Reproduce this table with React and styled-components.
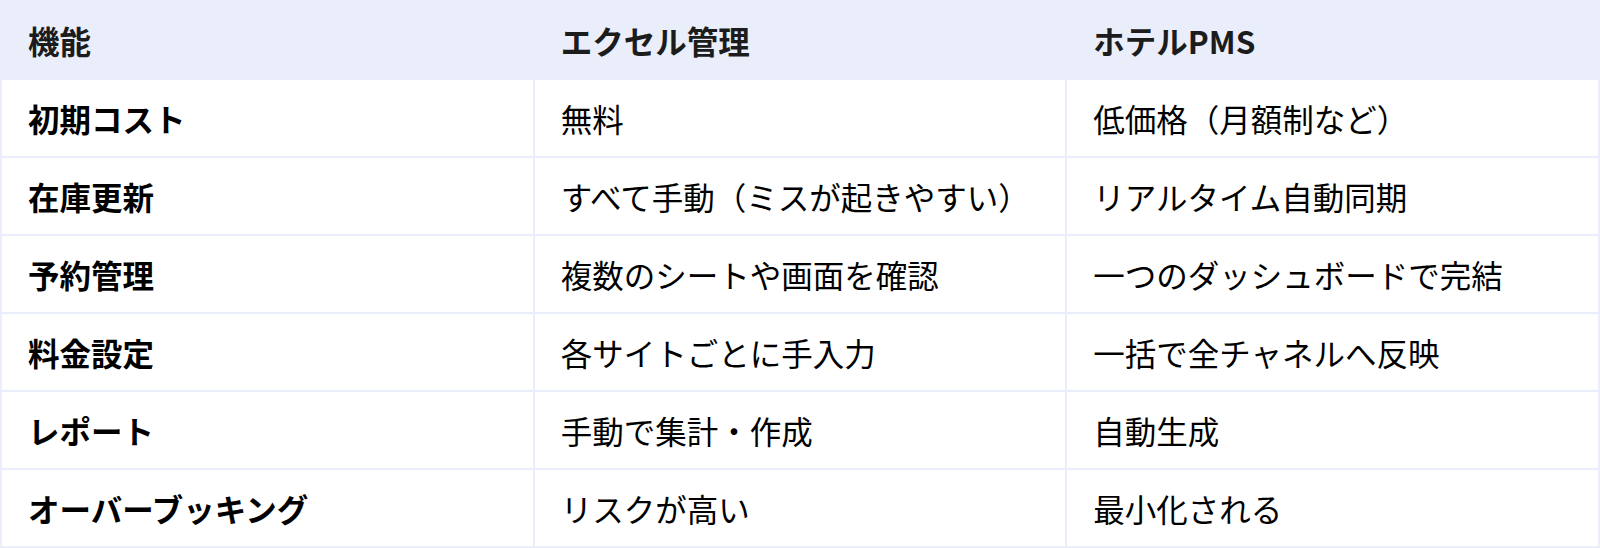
import React from "react";
import styled, { createGlobalStyle } from "styled-components";

const Global = createGlobalStyle`
  html, body { margin: 0; padding: 0; background: #ffffff; }
  body { font-family: "Noto Sans CJK JP", "Noto Sans", sans-serif; }
`;

const Table = styled.table`
  width: 1600px;
  border-collapse: collapse;
  table-layout: fixed;
  border: 2px solid #eaeefb;
  font-family: "Noto Sans CJK JP", "Noto Sans", sans-serif;
`;

const HeadCell = styled.th`
  background: #eaeefb;
  border: 2px solid #eaeefb;
  height: 76px;
  padding: 0 26px;
  text-align: left;
  vertical-align: middle;
  font-size: 31.5px;
  font-weight: 700;
  color: #1c1c1c;
`;

const Cell = styled.td`
  border: 2px solid #eaeefb;
  height: 76px;
  padding: 0 26px;
  text-align: left;
  vertical-align: middle;
  font-size: 31.5px;
  font-weight: ${(p) => (p.$strong ? 700 : 400)};
  color: #000000;
  white-space: nowrap;
`;

const rows = [
  ["初期コスト", "無料", "低価格（月額制など）"],
  ["在庫更新", "すべて手動（ミスが起きやすい）", "リアルタイム自動同期"],
  ["予約管理", "複数のシートや画面を確認", "一つのダッシュボードで完結"],
  ["料金設定", "各サイトごとに手入力", "一括で全チャネルへ反映"],
  ["レポート", "手動で集計・作成", "自動生成"],
  ["オーバーブッキング", "リスクが高い", "最小化される"],
];

export default function App() {
  return (
    <>
      <Global />
      <Table>
        <thead>
          <tr>
            <HeadCell>機能</HeadCell>
            <HeadCell>エクセル管理</HeadCell>
            <HeadCell>ホテルPMS</HeadCell>
          </tr>
        </thead>
        <tbody>
          {rows.map((r) => (
            <tr key={r[0]}>
              <Cell $strong>{r[0]}</Cell>
              <Cell>{r[1]}</Cell>
              <Cell>{r[2]}</Cell>
            </tr>
          ))}
        </tbody>
      </Table>
    </>
  );
}
